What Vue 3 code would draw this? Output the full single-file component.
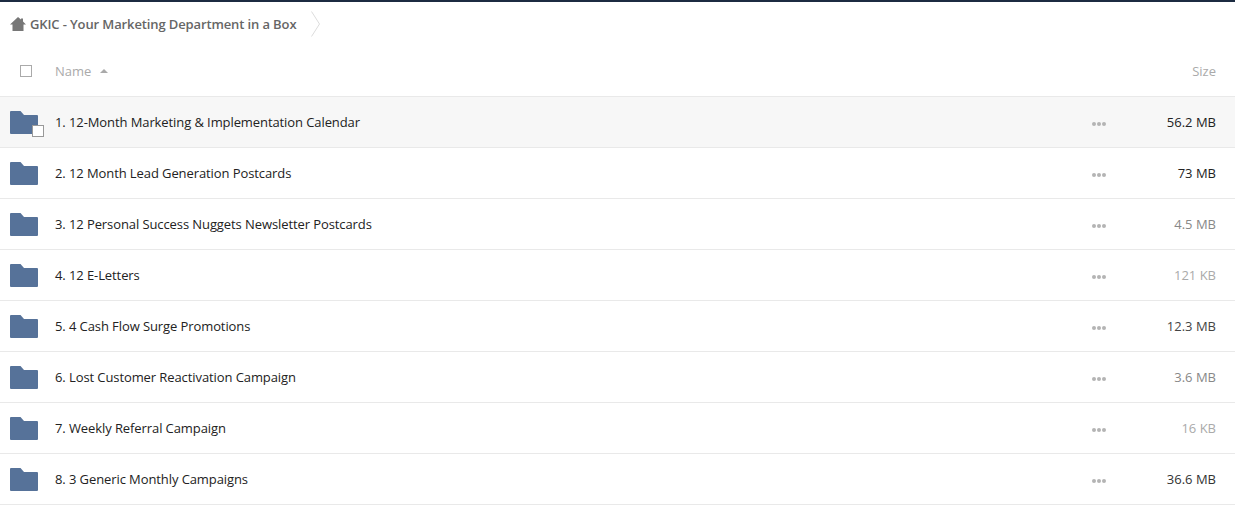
<template>
  <div class="page">
    <div class="crumbs">
      <svg class="home" width="16" height="14" viewBox="0 0 16 14">
        <path d="M8 0 L11 2.6 V1.5 H13 V4.4 L16 7.5 H13.5 V14 H2.5 V7.5 H0 Z" fill="#777" />
      </svg>
      <span class="crumb">GKIC - Your Marketing Department in a Box</span>
      <svg class="chev" width="10" height="26" viewBox="0 0 10 26">
        <path d="M0.5 0.5 L8.5 13 L0.5 25.5" fill="none" stroke="#dcdcdc" stroke-width="1" />
      </svg>
    </div>

    <div class="head">
      <span class="check"></span>
      <span class="head-name">Name</span>
      <span class="arrow"></span>
      <span class="head-size">Size</span>
    </div>

    <div v-for="(f, i) in folders" :key="f.name" class="row" :class="{ active: i === 0 }">
      <div class="folder">
        <svg width="28" height="24" viewBox="0 0 28 24">
          <path d="M0 2 Q0 1 1 1 H10.5 L14 5 H27 Q28 5 28 6 V23 Q28 24 27 24 H1 Q0 24 0 23 Z" fill="#567299" />
        </svg>
        <span v-if="i === 0" class="row-check"></span>
      </div>
      <span class="name">{{ f.name }}</span>
      <span class="dots"><i></i><i></i><i></i></span>
      <span class="size" :style="{ color: f.color }">{{ f.size }}</span>
    </div>
  </div>
</template>

<script setup>
const folders = [
  { name: '1. 12-Month Marketing & Implementation Calendar', size: '56.2 MB', color: '#222' },
  { name: '2. 12 Month Lead Generation Postcards', size: '73 MB', color: '#222' },
  { name: '3. 12 Personal Success Nuggets Newsletter Postcards', size: '4.5 MB', color: '#888' },
  { name: '4. 12 E-Letters', size: '121 KB', color: '#aaa' },
  { name: '5. 4 Cash Flow Surge Promotions', size: '12.3 MB', color: '#444' },
  { name: '6. Lost Customer Reactivation Campaign', size: '3.6 MB', color: '#888' },
  { name: '7. Weekly Referral Campaign', size: '16 KB', color: '#aaa' },
  { name: '8. 3 Generic Monthly Campaigns', size: '36.6 MB', color: '#333' }
]
</script>

<style>
body {
  background: #fff;
}
</style>

<style scoped>
.page {
  width: 1235px;
  height: 510px;
  overflow: hidden;
  box-sizing: border-box;
  border-top: 2px solid #1c2b41;
  font-family: "Open Sans", sans-serif;
  font-size: 13px;
  color: #222;
}
.crumbs {
  display: flex;
  align-items: center;
  height: 44px;
  padding-left: 10px;
}
.home {
  margin-right: 4px;
}
.crumb {
  font-weight: 600;
  color: #666;
  letter-spacing: -0.12px;
}
.chev {
  margin-left: 15px;
}
.head {
  display: flex;
  align-items: center;
  height: 50px;
  padding: 0 19px 0 20px;
  border-bottom: 1px solid #e9e9e9;
  color: #aaa;
}
.check {
  width: 10px;
  height: 10px;
  border: 1px solid #aaa;
  margin-right: 23px;
}
.arrow {
  width: 0;
  height: 0;
  border-left: 4px solid transparent;
  border-right: 4px solid transparent;
  border-bottom: 4px solid #aaa;
  margin-left: 9px;
}
.head-size {
  margin-left: auto;
}
.row {
  display: flex;
  align-items: center;
  height: 50px;
  padding: 0 19px 0 10px;
  border-bottom: 1px solid #e9e9e9;
}
.row.active {
  background: #f7f7f7;
}
.folder {
  position: relative;
  display: flex;
  width: 28px;
  height: 24px;
  margin-right: 17px;
}
.row-check {
  position: absolute;
  right: -6px;
  bottom: -3px;
  width: 10px;
  height: 10px;
  background: #fff;
  border: 1px solid #999;
}
.name {
  color: #222;
  letter-spacing: -0.09px;
}
.dots {
  display: flex;
  gap: 1px;
  margin-left: auto;
  margin-top: 4px;
}
.dots i {
  width: 4px;
  height: 4px;
  border-radius: 50%;
  background: #b4b4b4;
}
.size {
  width: 110px;
  text-align: right;
}
</style>
